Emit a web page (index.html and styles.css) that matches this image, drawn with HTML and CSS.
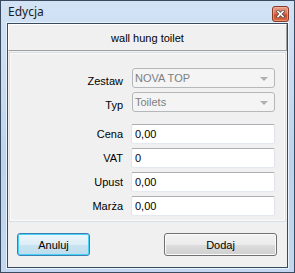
FILE: index.html
```html
<!DOCTYPE html>
<html lang="pl">
<head>
  <meta charset="UTF-8">
  <title>Edycja</title>
  <link rel="stylesheet" href="styles.css">
</head>
<body>
  <div class="window">
    <div class="titlebar">
      <span class="title">Edycja</span>
      <span class="close" title="Zamknij">
        <svg width="9" height="8" viewBox="0 0 9 8">
          <path d="M2 1.5 L7 6.5 M7 1.5 L2 6.5" stroke="#5b4a46" stroke-width="3.2" stroke-linecap="square"/>
          <path d="M2 1.5 L7 6.5 M7 1.5 L2 6.5" stroke="#fff" stroke-width="1.6" stroke-linecap="square"/>
        </svg>
      </span>
    </div>

    <div class="client">
      <div class="header">wall hung toilet</div>

      <div class="panel">
        <div class="rows combos">
          <label class="label">Zestaw</label>
          <div class="combo">NOVA TOP <span class="arrow"></span></div>
          <label class="label">Typ</label>
          <div class="combo">Toilets <span class="arrow"></span></div>
        </div>

        <div class="rows fields">
          <label class="label">Cena</label>
          <input class="field" type="text" value="0,00">
          <label class="label">VAT</label>
          <input class="field" type="text" value="0">
          <label class="label">Upust</label>
          <input class="field" type="text" value="0,00">
          <label class="label">Marża</label>
          <input class="field" type="text" value="0,00">
        </div>
      </div>

      <div class="actions">
        <button class="btn btn-default">Anuluj</button>
        <button class="btn btn-wide">Dodaj</button>
      </div>
    </div>
  </div>
</body>
</html>
```

FILE: styles.css
```css
html, body {
  margin: 0;
  height: 100%;
  overflow: hidden;
  background-color: #fff;
}

.window {
  width: 295px;
  height: 273px;
  box-sizing: border-box;
  display: flex;
  flex-direction: column;
  border: 1px solid #3a4b60;
  padding: 0 6px 4px 6px;
  background: linear-gradient(to bottom, #d3e3f6, #bcd3ee 60%, #c3d8f0);
  font-family: "Liberation Sans", Arial, sans-serif;
  font-size: 11px;
}

.titlebar {
  height: 22px;
  display: flex;
  align-items: center;
  justify-content: space-between;
  padding-left: 1px;
}

.title {
  font-family: "Noto Sans", "Liberation Sans", sans-serif;
  font-size: 12px;
  color: #1a1a1a;
  padding-bottom: 1px;
}

.close {
  width: 17px;
  height: 16px;
  box-sizing: border-box;
  margin-right: -1px;
  margin-top: 3px;
  border: 1px solid #8a3a28;
  border-radius: 3px;
  box-shadow: inset 0 0 0 1px rgba(255, 200, 180, 0.45);
  background-color: #d0603f;
  background-image: linear-gradient(to bottom, #e8a089, #dc7556 45%, #c9502f 55%, #d8683f);
  display: flex;
  align-items: center;
  justify-content: center;
}

.client {
  flex: 1;
  display: flex;
  flex-direction: column;
  border: 1px solid #384a5e;
  box-shadow: 0 0 0 1px #e9f1fb;
  background-color: #f0f0f0;
}

.header {
  height: 27px;
  box-sizing: border-box;
  border-top: 1px solid #fff;
  border-left: 1px solid #fff;
  border-right: 1px solid #a0a0a0;
  border-bottom: 1px solid #a0a0a0;
  display: flex;
  align-items: center;
  justify-content: center;
  color: #000;
}

.panel {
  height: 170px;
  box-sizing: border-box;
  margin: 1px 1px 0 1px;
  border: 1px solid #d5dfe5;
  box-shadow: inset 0 0 0 1px #fafafa;
  padding: 15px 10px 5px 0;
}

.rows {
  display: grid;
  grid-template-columns: 113px 144px;
  column-gap: 8px;
  row-gap: 4px;
  grid-auto-rows: 20px;
}

.fields {
  margin-top: 12px;
}

.label {
  text-align: right;
  color: #000;
  line-height: 20px;
}

.combos .label {
  align-self: end;
  line-height: 13px;
}

.combo {
  position: relative;
  margin-left: 1px;
  box-sizing: border-box;
  height: 20px;
  border: 1px solid #b5b8bb;
  border-radius: 3px;
  background-color: #f4f4f4;
  color: #7e7e7e;
  padding-left: 2px;
  line-height: 18px;
}

.arrow {
  position: absolute;
  right: 6px;
  top: 8px;
  width: 0;
  height: 0;
  border-left: 4px solid transparent;
  border-right: 4px solid transparent;
  border-top: 4px solid #b0b0b0;
}

.field {
  box-sizing: border-box;
  height: 20px;
  width: 144px;
  margin: 0;
  padding: 0 3px;
  border: 1px solid #e2e3ea;
  border-top-color: #abadb3;
  border-bottom-color: #e3e9ef;
  border-radius: 2px;
  background-color: #fff;
  font-family: "Liberation Sans", Arial, sans-serif;
  font-size: 11px;
  color: #000;
  outline: none;
}

.actions {
  margin-top: 11px;
  padding: 0 10px 0 9px;
  display: flex;
  justify-content: space-between;
}

.btn {
  height: 23px;
  box-sizing: border-box;
  border: 1px solid #707070;
  border-radius: 3px;
  box-shadow: inset 0 0 0 1px #fbfbfb;
  background: linear-gradient(to bottom, #f2f2f2, #ebebeb 50%, #dddddd 50%, #cfcfcf);
  font-family: "Liberation Sans", Arial, sans-serif;
  font-size: 11px;
  color: #000;
  padding: 0;
}

.btn-default {
  width: 73px;
  border-color: #3c7fb1;
  box-shadow: inset 0 0 0 1px #48d1f8;
  background: linear-gradient(to bottom, #eef7fc, #dcedf6 50%, #c9e4f1 50%, #bcdcec);
}

.btn-wide {
  width: 113px;
}
```
